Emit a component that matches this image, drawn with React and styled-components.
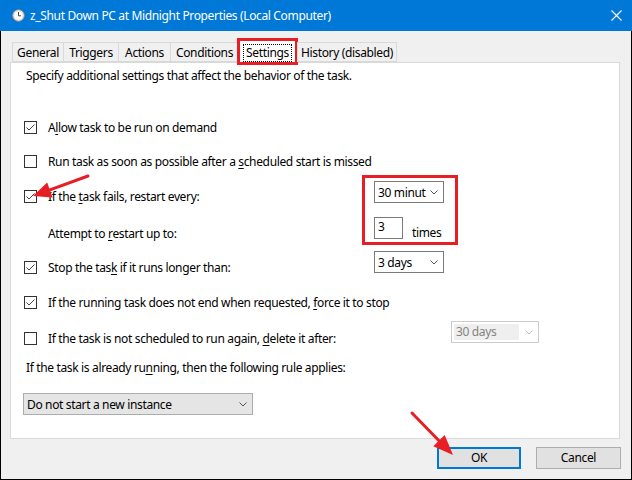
import React from 'react'
import styled, { createGlobalStyle } from 'styled-components'

const GlobalStyle = createGlobalStyle`
  html, body { margin: 0; padding: 0; background: #fff; }
  body {
    font-family: "Segoe UI", "Noto Sans", "Open Sans", sans-serif;
    font-size: 12px;
    letter-spacing: -0.35px;
    color: #000;
  }
  * { box-sizing: border-box; }
`

const RED = '#e81e25'

const Window = styled.div`
  position: relative;
  width: 632px;
  height: 480px;
  display: flex;
  flex-direction: column;
  overflow: hidden;
`

const TitleBar = styled.div`
  height: 31px;
  flex: none;
  background: #0078d7;
  color: #fff;
  display: flex;
  align-items: center;
  padding-left: 12px;
  gap: 5px;
`

const TitleText = styled.div`
  line-height: 16px;
  white-space: nowrap;
`

const CloseBtn = styled.div`
  margin-left: auto;
  width: 46px;
  height: 31px;
  display: flex;
  align-items: center;
  justify-content: center;
  padding-left: 14px;
`

const Body = styled.div`
  flex: 1;
  background: #f0f0f0;
  border: 1px solid #000;
  border-top: none;
  padding: 11px 0 0 9px;
  display: flex;
  flex-direction: column;
`

const TabStrip = styled.div`
  display: flex;
  align-items: flex-start;
  height: 20px;
  padding-left: 2px;
  position: relative;
  z-index: 2;
`

const Tab = styled.div`
  position: relative;
  width: ${p => p.$w}px;
  height: ${p => (p.$active ? 23 : 20)}px;
  margin-top: ${p => (p.$active ? -2 : 0)}px;
  background: ${p => (p.$active ? '#fff' : '#f0f0f0')};
  border: 1px solid #d9d9d9;
  border-right: ${p => (p.$last || p.$active ? '1px solid #d9d9d9' : 'none')};
  border-bottom: ${p => (p.$active ? 'none' : '1px solid #d9d9d9')};
  display: flex;
  align-items: ${p => (p.$active ? 'flex-end' : 'center')};
  justify-content: center;
  line-height: 16px;
  white-space: nowrap;
  padding-top: ${p => (p.$active ? 0 : 1)}px;
  padding-bottom: ${p => (p.$active ? 1 : 0)}px;

  ${p =>
    p.$marked &&
    `
    &::after {
      content: '';
      position: absolute;
      left: -2px;
      right: -2px;
      top: -3px;
      bottom: -2px;
      border: 3px solid ${RED};
      pointer-events: none;
    }
  `}
`

const FocusBox = styled.span`
  border: 1px dotted #000;
  padding: 0 2px 1px;
  line-height: 15px;
`

const Panel = styled.div`
  position: relative;
  width: 610px;
  height: 377px;
  background: #fff;
  border: 1px solid #d9d9d9;
  padding: 0 0 0 13px;
  display: flex;
  flex-direction: column;
`

const Note = styled.div`
  margin-top: ${p => p.$mt}px;
  margin-left: 2px;
  height: ${p => p.$h || 16}px;
  line-height: ${p => p.$h || 16}px;
  white-space: nowrap;
`

const Row = styled.div`
  margin-top: ${p => p.$mt}px;
  margin-left: ${p => p.$ml || 0}px;
  height: 22px;
  display: flex;
  align-items: flex-start;
`

const LabelCell = styled.div`
  width: ${p => p.$w || 350}px;
  flex: none;
  height: 22px;
  margin-top: ${p => p.$drop || 0}px;
  display: flex;
  align-items: center;
  gap: 11px;
  padding-left: ${p => p.$indent || 0}px;
  white-space: nowrap;
`

const Box = styled.span`
  width: 13px;
  height: 13px;
  flex: none;
  border: 1px solid #333;
  background: #fff;
  display: flex;
  align-items: center;
  justify-content: center;
`

const Key = styled.span`
  text-decoration: underline;
  text-underline-offset: 2px;
`

const Select = styled.div`
  width: ${p => p.$w}px;
  height: 22px;
  flex: none;
  display: flex;
  align-items: center;
  justify-content: space-between;
  padding: 0 5px 0 ${p => (p.$disabled ? 2 : 3)}px;
  background: ${p => (p.$gray ? '#e5e5e5' : '#fff')};
  border: 1px solid ${p => (p.$disabled ? '#cccccc' : p.$gray ? '#adadad' : '#7a7a7a')};
  color: ${p => (p.$disabled ? '#838383' : '#000')};
  white-space: nowrap;
`

const SelectText = styled.span`
  line-height: 16px;
  padding: 0 ${p => (p.$disabled ? 2 : 0)}px;
  background: ${p => (p.$disabled ? '#efefef' : 'transparent')};
  flex: ${p => (p.$disabled ? '0 0 65px' : 'none')};
`

const NumberBox = styled.div`
  width: 29px;
  height: 22px;
  flex: none;
  border: 1px solid #7a7a7a;
  padding: 1px 0 0 3px;
  line-height: 16px;
`

const Unit = styled.span`
  margin-left: 9px;
  margin-top: 8px;
  line-height: 16px;
`

const Highlight = styled.div`
  position: absolute;
  left: 351px;
  top: 112px;
  width: 96px;
  height: 70px;
  border: 3px solid ${RED};
  pointer-events: none;
`

const Footer = styled.div`
  display: flex;
  justify-content: flex-end;
  gap: 15px;
  margin-top: 8px;
  padding-right: 10px;
`

const Button = styled.div`
  width: ${p => p.$w}px;
  height: 22px;
  display: flex;
  align-items: center;
  justify-content: center;
  background: #e1e1e1;
  border: ${p => (p.$primary ? '2px solid #0078d7' : '1px solid #adadad')};
  line-height: 16px;
`

const Overlay = styled.svg`
  position: absolute;
  left: 0;
  top: 0;
  pointer-events: none;
`

const Chevron = ({ color = '#555' }) => (
  <svg width="8" height="5" viewBox="0 0 8 5">
    <polyline points="0.5,0.5 4,4 7.5,0.5" fill="none" stroke={color} strokeWidth="1" />
  </svg>
)

const Check = ({ on }) => (
  <Box>
    {on && (
      <svg width="11" height="11" viewBox="0 0 11 11">
        <polyline points="1.5,5.5 4,8 9.5,2.5" fill="none" stroke="#444" strokeWidth="1" />
      </svg>
    )}
  </Box>
)

const ClockIcon = () => (
  <svg width="13" height="13" viewBox="0 0 13 13">
    <circle cx="6.5" cy="6.5" r="5.8" fill="#f3f1ea" stroke="#8a8a8a" strokeWidth="1" />
    <circle cx="6.5" cy="6.5" r="4.4" fill="#fff" stroke="#d8d2c0" strokeWidth="0.6" />
    <polyline points="6.5,3 6.5,6.8 9,6.8" fill="none" stroke="#444" strokeWidth="1" />
  </svg>
)

const tabs = [
  { label: 'General', w: 51 },
  { label: 'Triggers', w: 55 },
  { label: 'Actions', w: 52 },
  { label: 'Conditions', w: 68 },
  { label: 'Settings', w: 59, active: true },
  { label: 'History (disabled)', w: 100, last: true },
]

const Arrow = ({ tail, tip, left, right }) => (
  <g>
    <line x1={tail[0]} y1={tail[1]} x2={(left[0] + right[0]) / 2} y2={(left[1] + right[1]) / 2} stroke={RED} strokeWidth="3" strokeLinecap="round" />
    <polygon points={`${tip[0]},${tip[1]} ${left[0]},${left[1]} ${right[0]},${right[1]}`} fill={RED} />
  </g>
)

export default function App() {
  return (
    <>
      <GlobalStyle />
      <Window>
        <TitleBar>
          <ClockIcon />
          <TitleText>z_Shut Down PC at Midnight Properties (Local Computer)</TitleText>
          <CloseBtn>
            <svg width="11" height="11" viewBox="0 0 11 11">
              <path d="M0.5 0.5 L10.5 10.5 M10.5 0.5 L0.5 10.5" stroke="#fff" strokeWidth="1.1" />
            </svg>
          </CloseBtn>
        </TitleBar>
        <Body>
          <TabStrip>
            {tabs.map(t => (
              <Tab key={t.label} $w={t.w} $active={t.active} $last={t.last} $marked={t.active}>
                {t.active ? <FocusBox>{t.label}</FocusBox> : t.label}
              </Tab>
            ))}
          </TabStrip>
          <Panel>
            <Note $mt={5}>Specify additional settings that affect the behavior of the task.</Note>

            <Row $mt={32}>
              <LabelCell $w={500}>
                <Check on />
                <span>A<Key>l</Key>low task to be run on demand</span>
              </LabelCell>
            </Row>

            <Row $mt={12}>
              <LabelCell $w={500}>
                <Check />
                <span>Run task as soon as possible after a <Key>s</Key>cheduled start is missed</span>
              </LabelCell>
            </Row>

            <Row $mt={9}>
              <LabelCell $drop={4}>
                <Check on />
                <span>If the <Key>t</Key>ask fails, restart every:</span>
              </LabelCell>
              <Select $w={70}>
                <span>30 minut</span>
                <Chevron />
              </Select>
            </Row>

            <Row $mt={14}>
              <LabelCell $drop={5} $indent={24}>
                <span>Attempt to <Key>r</Key>estart up to:</span>
              </LabelCell>
              <NumberBox>3</NumberBox>
              <Unit>times</Unit>
            </Row>

            <Row $mt={12}>
              <LabelCell $drop={5}>
                <Check on />
                <span>Stop the tas<Key>k</Key> if it runs longer than:</span>
              </LabelCell>
              <Select $w={70}>
                <span>3 days</span>
                <Chevron />
              </Select>
            </Row>

            <Row $mt={18}>
              <LabelCell $w={560}>
                <Check on />
                <span>If the running task does not end when requested, <Key>f</Key>orce it to stop</span>
              </LabelCell>
            </Row>

            <Row $mt={8}>
              <LabelCell $w={427} $drop={6}>
                <Check />
                <span>If the task is not scheduled to run again, <Key>d</Key>elete it after:</span>
              </LabelCell>
              <Select $w={88} $disabled>
                <SelectText $disabled>30 days</SelectText>
                <Chevron color="#bfbfbf" />
              </Select>
            </Row>

            <Note $mt={14} $h={22}>If the task is already ru<Key>n</Key>ning, then the following rule applies:</Note>

            <Row $mt={14} $ml={-1}>
              <Select $w={230} $gray>
                <span>Do not start a new instance</span>
                <Chevron />
              </Select>
            </Row>

            <Highlight />
          </Panel>
          <Footer>
            <Button $w={84} $primary>OK</Button>
            <Button $w={85}>Cancel</Button>
          </Footer>
        </Body>
        <Overlay width="632" height="480" viewBox="0 0 632 480">
          <Arrow tail={[88, 176]} tip={[33, 196]} left={[47.2, 182.4]} right={[52.6, 197.4]} />
          <Arrow tail={[412, 413]} tip={[453, 455]} left={[433.3, 446.3]} right={[444.7, 435.1]} />
        </Overlay>
      </Window>
    </>
  )
}
